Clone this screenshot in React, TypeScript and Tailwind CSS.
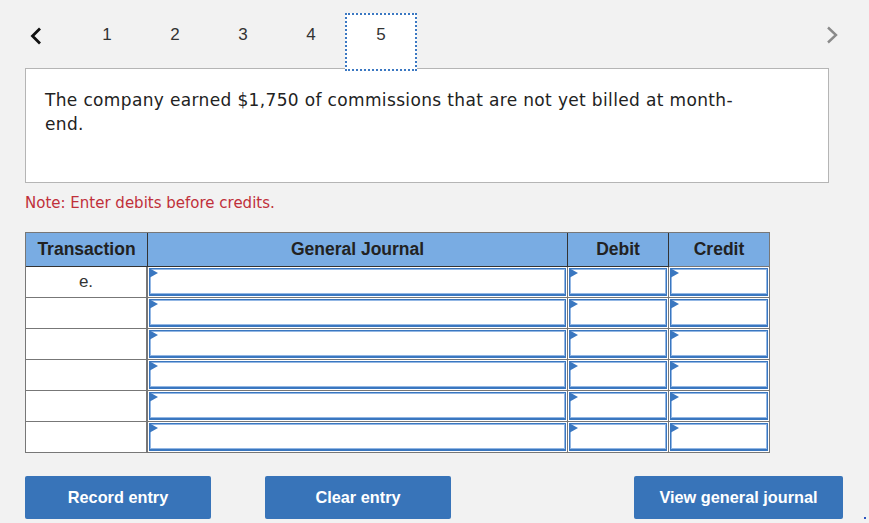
import React from 'react';

// Sayfa numaraları ve tablo satırları
const pages = [1, 2, 3, 4, 5];
const rows = ['e.', '', '', '', '', ''];

const Marker = () => (
    <span className="absolute -left-px -top-px w-0 h-0 border-y-[5px] border-y-transparent border-l-[9px] border-l-[#3a77c0]"></span>
);

const EntryInput = () => (
    <div className="relative h-full border border-[#3a77c0] border-b-2 bg-white shadow-[inset_0_0_0_1px_#93b7e4]">
        <Marker />
    </div>
);

export default function App() {
    return (
        <div className="relative min-h-[523px] w-[869px] bg-[#f2f2f2] font-['Liberation_Sans',Arial,sans-serif] text-[#333] overflow-hidden">
            {/* Üst gezinme */}
            <div className="relative z-10 flex items-start pt-[13px] -mb-[3px]">
                <div className="w-[73px] h-[58px] flex items-start pt-[14px] pl-[30px]">
                    <svg width="12" height="18" viewBox="0 0 12 18" fill="none">
                        <path d="M10 1.5 L2.5 9 L10 16.5" stroke="#111" strokeWidth="2.8" />
                    </svg>
                </div>
                {pages.map((p) =>
                    p === 5 ? (
                        <div key={p} className="w-[72px] h-[58px] bg-white border-2 border-dotted border-[#3b78c2] text-center pt-[10px] text-[17px] leading-5">
                            {p}
                        </div>
                    ) : (
                        <div key={p} className="w-[68px] h-[58px] text-center pt-[12px] text-[17px] leading-5">
                            {p}
                        </div>
                    )
                )}
                <div className="ml-auto mr-[31px] pt-[13px]">
                    <svg width="12" height="18" viewBox="0 0 12 18" fill="none">
                        <path d="M2 1.5 L10 9 L2 16.5" stroke="#8a8a8a" strokeWidth="2.4" />
                    </svg>
                </div>
            </div>

            {/* Soru kutusu */}
            <div className="mx-[25px] w-[804px] h-[115px] bg-white border border-[#b5b5b5] px-[19px] pt-[19px] font-['DejaVu_Sans',Verdana,sans-serif] text-[17px] tracking-[0.35px] leading-6 text-[#222]">
                The company earned $1,750 of commissions that are not yet billed at month-<br />end.
            </div>

            <p className="ml-[25px] mt-[10px] font-['DejaVu_Sans',Verdana,sans-serif] text-[15px] leading-5 text-[#c0303a]">
                Note: Enter debits before credits.
            </p>

            {/* Yevmiye tablosu */}
            <div className="ml-[25px] mt-[19px] w-[745px] grid grid-cols-[122px_420px_101px_101px] border-l border-t border-[#777]">
                <div className="h-[34px] bg-[#79ace3] border-r border-b border-[#333] flex items-center justify-center font-bold text-[17.5px] text-[#222]">Transaction</div>
                <div className="h-[34px] bg-[#79ace3] border-r border-b border-[#333] flex items-center justify-center font-bold text-[17.5px] text-[#222]">General Journal</div>
                <div className="h-[34px] bg-[#79ace3] border-r border-b border-[#333] flex items-center justify-center font-bold text-[17.5px] text-[#222]">Debit</div>
                <div className="h-[34px] bg-[#79ace3] border-r border-b border-[#777] flex items-center justify-center font-bold text-[17.5px] text-[#222]">Credit</div>
                {rows.map((t, i) => (
                    <React.Fragment key={i}>
                        <div className="h-[31px] bg-white border-r-2 border-b border-[#777] flex items-center justify-center text-[17px] text-[#333]">{t}</div>
                        <div className="h-[31px] bg-white border-r border-b border-[#777] p-px"><EntryInput /></div>
                        <div className="h-[31px] bg-white border-r border-b border-[#777] p-px"><EntryInput /></div>
                        <div className="h-[31px] bg-white border-r border-b border-[#777] p-px"><EntryInput /></div>
                    </React.Fragment>
                ))}
            </div>

            {/* Butonlar */}
            <div className="flex items-center mt-[23px] pl-[25px] pr-[26px]">
                <button className="w-[186px] h-[43px] rounded-[2px] bg-[#3874b9] text-white font-bold text-[16.3px]">Record entry</button>
                <button className="ml-[54px] w-[186px] h-[43px] rounded-[2px] bg-[#3874b9] text-white font-bold text-[16.3px]">Clear entry</button>
                <button className="ml-auto w-[209px] h-[43px] rounded-[2px] bg-[#3874b9] text-white font-bold text-[16.3px]">View general journal</button>
            </div>

            {/* Sağ alttaki küçük nokta */}
            <span className="absolute right-[3px] bottom-[4px] w-[2px] h-[2px] bg-[#2a55c0]"></span>
        </div>
    );
}
